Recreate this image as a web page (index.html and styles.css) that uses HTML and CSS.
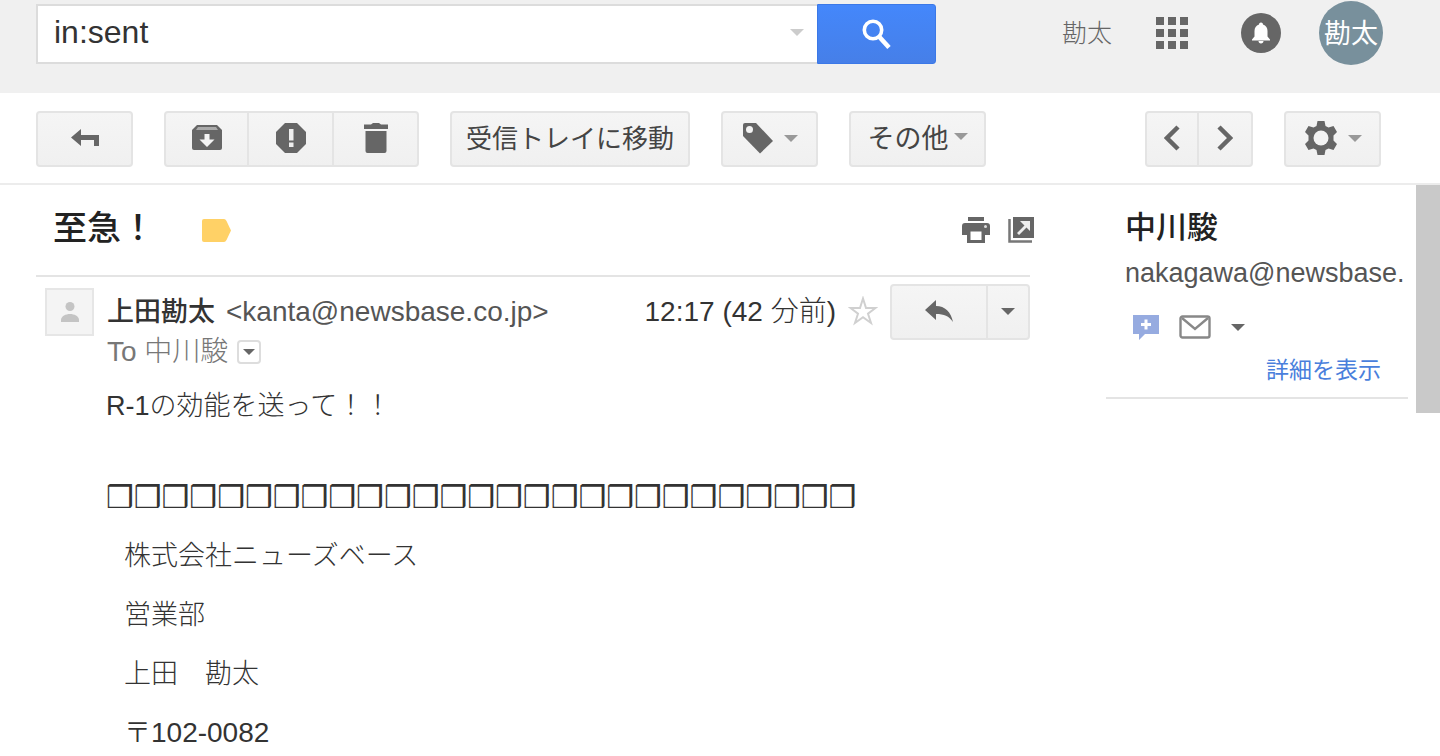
FILE: index.html
```html
<!DOCTYPE html>
<html lang="ja">
<head>
    <meta charset="UTF-8">
    <meta name="viewport" content="width=device-width, initial-scale=1.0">
    <title>至急！</title>
    <link rel="stylesheet" href="styles.css">
</head>
<body>

    <header class="header">
        <form class="search">
            <input class="search-input" type="text" value="in:sent" aria-label="検索">
            <button class="search-option" type="button" aria-label="検索オプション"><span class="caret light"></span></button>
            <button class="search-btn" type="submit" aria-label="検索">
                <svg width="30" height="32" viewBox="0 0 30 32" fill="none" stroke="#fff"><circle cx="11" cy="12" r="8.7" stroke-width="3.6"/><path d="M17 18.500L27 29.500" stroke-width="4.600"/></svg>
            </button>
        </form>
        <div class="account">
            <a class="account-name" href="#">勘太</a>
            <button class="icon-btn" aria-label="アプリ">
                <svg width="34" height="34" viewBox="0 0 34 34" fill="#666"><path d="M1 1h8v8H1zM13 1h8v8h-8zM25 1h8v8h-8zM1 13h8v8H1zM13 13h8v8h-8zM25 13h8v8h-8zM1 25h8v8H1zM13 25h8v8h-8zM25 25h8v8h-8z"/></svg>
            </button>
            <button class="icon-btn bell" aria-label="通知">
                <svg width="40" height="40" viewBox="0 0 40 40"><circle cx="20" cy="20" r="20" fill="#666"/><path d="M20 9.500c1.500 0 2 1 2 2 3 1 4.500 3.500 4.500 6.500v5.500l2.500 3v1H11v-1l2.500-3V18c0-3 1.500-5.500 4.500-6.500 0-1 .5-2 2-2zM17.500 28h5c0 1.500-1 2.500-2.500 2.500s-2.500-1-2.500-2.500z" fill="#fff"/></svg>
            </button>
            <button class="avatar">勘太</button>
        </div>
    </header>

    <nav class="toolbar">
        <button class="btn back" aria-label="戻る">
            <svg width="28" height="20" viewBox="0 0 28 20" fill="#666"><path d="M0 9.500L10 1v6h18v11h-5v-6H10v6z"/></svg>
        </button>
        <div class="btn-group">
            <button class="btn tool" aria-label="アーカイブ">
                <svg width="30" height="26" viewBox="0 0 30 26"><path d="M5 0h20l5 5v18q0 2-2 2H2q-2 0-2-2V5z" fill="#666"/><path d="M6 2h18l2 3H4z" fill="#aaa"/><path d="M12.500 9h5v5.500h5L15 22l-7.500-7.500h5z" fill="#f3f3f3"/></svg>
            </button>
            <button class="btn tool" aria-label="迷惑メール">
                <svg width="30" height="30" viewBox="0 0 30 30"><path d="M9 0h12l9 9v12l-9 9H9l-9-9V9z" fill="#666"/><path d="M13 6h4.500v11.500H13zM13 19.500h4.500V24H13z" fill="#eee"/></svg>
            </button>
            <button class="btn tool" aria-label="削除">
                <svg width="26" height="30" viewBox="0 0 26 30" fill="#666"><path d="M1 1.500h7L10 0h6l2 1.500h7V6H1zM2.500 8h21v20q0 2-2 2h-17q-2 0-2-2z"/></svg>
            </button>
        </div>
        <button class="btn text">受信トレイに移動</button>
        <button class="btn label" aria-label="ラベル">
            <svg width="32" height="32" viewBox="0 0 32 32"><path d="M3 1h11L31 19 18 31.500 1 14V3q0-2 2-2z" fill="#666"/><circle cx="7.500" cy="7.500" r="3.500" fill="#f3f3f3"/></svg>
            <span class="caret"></span>
        </button>
        <button class="btn text more">その他<span class="caret"></span></button>
        <div class="btn-group pager">
            <button class="btn page" aria-label="前へ">
                <svg width="16" height="26" viewBox="0 0 16 26" fill="none" stroke="#666" stroke-width="4.500"><path d="M14 2L3 13l11 11"/></svg>
            </button>
            <button class="btn page" aria-label="次へ">
                <svg width="16" height="26" viewBox="0 0 16 26" fill="none" stroke="#666" stroke-width="4.500"><path d="M2 2l11 11L2 24"/></svg>
            </button>
        </div>
        <button class="btn setting" aria-label="設定">
            <svg width="34" height="34" viewBox="0 0 34 34"><path d="M13.500 0h7l1 5 3 1.500L29.500 5 33 11l-3.500 3.500v5L33 23l-3.500 6-5-1.500-3 1.500-1 5h-7l-1-5-3-1.500-5 1.500L1 23l3.500-3.500v-5L1 11l3.500-6 5 1.500 3-1.500z" fill="#666"/><circle cx="17" cy="17" r="7.500" fill="#f3f3f3"/></svg>
            <span class="caret"></span>
        </button>
    </nav>

    <main class="main">
        <article class="mail">
            <div class="subject">
                <h1>至急！</h1>
                <svg width="29" height="23" viewBox="0 0 29 23"><path d="M2 0h20q1.500 0 2.500 2l4.500 9.500-4.500 9.500q-1 2-2.500 2H2q-2 0-2-2V2q0-2 2-2z" fill="#ffd166"/></svg>
                <div class="subject-tools">
                    <button class="icon-btn" aria-label="印刷">
                        <svg width="28" height="26" viewBox="0 0 28 26"><path d="M6 0h16v4H6zM3 6h22q3 0 3 3v9h-5v8H5v-8H0V9q0-3 3-3z" fill="#666"/><path d="M8.500 14.500h11V23h-11z" fill="#fff"/><circle cx="23.500" cy="9.500" r="1.500" fill="#ddd"/></svg>
                    </button>
                    <button class="icon-btn" aria-label="新しいウィンドウ">
                        <svg width="26" height="26" viewBox="0 0 26 26"><path d="M5 0h21v21H5z" fill="#666"/><path d="M1.500 2v22.500H24" fill="none" stroke="#777" stroke-width="2.500"/><path d="M12 4h10v10l-3.500-3.500L11 18l-2-2 7.500-7.500z" fill="#eee"/></svg>
                    </button>
                </div>
            </div>

            <div class="mail-head">
                <div class="photo">
                    <svg width="20" height="20" viewBox="0 0 20 20" fill="#c4c4c4"><circle cx="10" cy="4.500" r="4.500"/><path d="M1 20v-2c0-4 5-6 9-6s9 2 9 6v2z"/></svg>
                </div>
                <div class="from">
                    <div class="sender"><span class="sender-name">上田勘太</span><span class="address">&lt;kanta@newsbase.co.jp&gt;</span></div>
                    <div class="to">To 中川駿<button class="detail" aria-label="詳細を表示"><span class="caret dark small"></span></button></div>
                </div>
                <time class="time">12:17 (42 <span class="ago">分前</span>)</time>
                <button class="icon-btn star" aria-label="スター">
                    <svg width="30" height="30" viewBox="0 0 30 30" fill="none" stroke="#d0d0d0" stroke-width="2"><path d="M15 2.500l3 9.500h9.500l-7.500 5.700 3 9.300-8-5.800L7 27l3-9.300L2.500 12H12z"/></svg>
                </button>
                <div class="btn-group">
                    <button class="btn reply" aria-label="返信">
                        <svg width="28" height="22" viewBox="0 0 28 22" fill="#666"><path d="M11 0v6c9 0 15 6 17 16-4-6-9-8-17-8v6L0 10z"/></svg>
                    </button>
                    <button class="btn reply-more" aria-label="その他"><span class="caret dark"></span></button>
                </div>
            </div>

            <div class="mail-body">
                <p class="message">R-1の効能を送って！！</p>
                <p class="rule">❒❒❒❒❒❒❒❒❒❒❒❒❒❒❒❒❒❒❒❒❒❒❒❒❒❒❒</p>
                <div class="signature">
                    <p>株式会社ニューズベース</p>
                    <p>営業部</p>
                    <p>上田　勘太</p>
                    <p>〒<span class="zip">102-0082</span></p>
                </div>
            </div>
        </article>

        <aside class="contact">
            <h2>中川駿</h2>
            <div class="contact-mail">nakagawa@newsbase.</div>
            <div class="contact-tools">
                <button class="icon-btn" aria-label="チャット">
                    <svg width="26" height="26" viewBox="0 0 26 26"><path d="M0 1h26v19H12l-6 6v-6H0z" fill="#96abe0"/><path d="M11.500 5.500h3V9H18v3h-3.500v3.500h-3V12H8V9h3.500z" fill="#fff"/></svg>
                </button>
                <button class="icon-btn" aria-label="メール">
                    <svg width="32" height="24" viewBox="0 0 32 24" fill="none" stroke="#888" stroke-width="2.400"><rect x="1.500" y="1.500" width="29" height="21" rx="2"/><path d="M3 3l13 11L29 3"/></svg>
                </button>
                <button class="icon-btn" aria-label="その他"><span class="caret dark"></span></button>
            </div>
            <a class="contact-link" href="#">詳細を表示</a>
        </aside>
        <div class="scrollbar"></div>
    </main>

</body>
</html>
```

FILE: styles.css
```css
*{
    box-sizing: border-box;
}
body{
    margin: 0;
    height: 100vh;
    display: flex;
    flex-direction: column;
    overflow: hidden;
    background-color: #fff;
    color: #333;
    font-family: "Liberation Sans", "Noto Sans CJK JP", sans-serif;
    font-size: 28px;
    line-height: 40px;
}
h1,h2,p{
    margin: 0;
}
a{
    text-decoration: none;
}
button{
    padding: 0;
    font-family: inherit;
    cursor: pointer;
}
svg{
    display: block;
    flex: none;
}
.caret{
    border: 7px solid transparent;
    border-top-color: #999;
    border-bottom: 0;
}
.caret.light{
    border-top-color: #ccc;
}
.caret.dark{
    border-top-color: #666;
}
.caret.small{
    border-width: 6px;
    border-bottom: 0;
}
.icon-btn{
    display: flex;
    align-items: center;
    border: 0;
    background: none;
}

/* header */
.header{
    flex: none;
    display: flex;
    justify-content: space-between;
    height: 93px;
    padding: 0 57px 0 36px;
    background-color: #f0f0f0;
}
.search{
    display: flex;
    width: 900px;
    height: 60px;
    margin-top: 4px;
}
.search-input{
    flex: 1;
    min-width: 0;
    padding: 0 16px 4px;
    border: 2px solid #dcdcdc;
    border-right: 0;
    font-family: inherit;
    font-size: 32px;
    color: #333;
    outline: none;
}
.search-option{
    display: flex;
    align-items: center;
    width: 27px;
    padding-bottom: 4px;
    border: 2px solid #dcdcdc;
    border-width: 2px 0;
    background-color: #fff;
}
.search-btn{
    display: flex;
    align-items: center;
    justify-content: center;
    width: 119px;
    border: 1px solid #3b78e7;
    border-radius: 0 3px 3px 0;
    background: linear-gradient(#4487fb, #467fe8);
}
.account{
    display: flex;
    align-items: center;
    height: 66px;
}
.account-name{
    margin-right: 43px;
    font-size: 25px;
    font-weight: 300;
    color: #666;
}
.bell{
    margin: 0 38px 0 52px;
}
.avatar{
    width: 64px;
    height: 64px;
    padding-bottom: 4px;
    border: 0;
    border-radius: 50%;
    background-color: #78909c;
    color: #fff;
    font-size: 27px;
}

/* toolbar */
.toolbar{
    flex: none;
    display: flex;
    gap: 31px;
    height: 92px;
    padding: 18px 59px 0 36px;
    border-bottom: 2px solid #ececec;
}
.btn{
    display: flex;
    align-items: center;
    justify-content: center;
    height: 56px;
    padding-bottom: 2px;
    border: 2px solid #e4e4e4;
    border-radius: 4px;
    background: linear-gradient(#f5f5f5, #f0f0f0);
    color: #444;
    font-size: 26px;
}
.btn-group{
    display: flex;
}
.btn-group .btn + .btn{
    border-left: 0;
    border-top-left-radius: 0;
    border-bottom-left-radius: 0;
}
.btn-group .btn:not(:last-child){
    border-top-right-radius: 0;
    border-bottom-right-radius: 0;
}
.back,
.label,
.setting{
    width: 97px;
}
.tool{
    width: 85px;
}
.text{
    width: 240px;
    padding-bottom: 6px;
}
.label{
    gap: 10px;
}
.more{
    width: 137px;
    gap: 5px;
    font-size: 27px;
}
.pager{
    margin-left: auto;
}
.page{
    width: 54px;
}
.setting{
    gap: 10px;
}

/* mail */
.main{
    flex: 1;
    min-height: 0;
    display: flex;
}
.mail{
    flex: 1;
    min-width: 0;
    margin: 0 76px 0 36px;
}
.subject{
    display: flex;
    align-items: center;
    height: 92px;
    padding-left: 17px;
    border-bottom: 2px solid #e4e4e4;
}
.subject h1{
    margin-right: 47px;
    padding-bottom: 4px;
    font-size: 34px;
    font-weight: 500;
    color: #222;
}
.subject-tools{
    display: flex;
    gap: 18px;
    margin-left: auto;
    margin-right: -4px;
}
.mail-head{
    display: flex;
    align-items: flex-start;
    padding-top: 7px;
}
.photo{
    display: flex;
    align-items: center;
    justify-content: center;
    width: 49px;
    height: 48px;
    margin: 4px 13px 0 9px;
    border: 2px solid #e6e6e6;
    background-color: #f4f4f4;
}
.from{
    flex: 1;
}
.sender,
.time{
    margin-top: 8px;
}
.sender-name{
    margin-right: 11px;
    font-size: 27px;
    font-weight: 500;
}
.address{
    color: #555;
}
.to{
    display: flex;
    align-items: center;
    color: #777;
    font-weight: 300;
}
.detail{
    display: flex;
    align-items: center;
    justify-content: center;
    width: 24px;
    height: 24px;
    margin-left: 9px;
    border: 2px solid #ddd;
    border-radius: 4px;
    background-color: #fff;
}
.ago{
    font-weight: 300;
}
.star{
    margin: 12px 12px 0;
}
.reply{
    width: 98px;
}
.reply-more{
    width: 42px;
}
.mail-body{
    padding: 14px 0 0 70px;
    font-weight: 300;
}
.message,
.signature{
    font-size: 27px;
}
.rule{
    margin-top: 51px;
    font-family: "DejaVu Sans", sans-serif;
    font-weight: 700;
    font-size: 31px;
    white-space: nowrap;
}
.signature{
    padding-left: 18px;
}
.signature p{
    margin-top: 19px;
}
.zip{
    font-size: 28px;
}

/* contact */
.contact{
    width: 302px;
    height: 214px;
    margin-right: 8px;
    padding: 23px 0 0 19px;
    border-bottom: 2px solid #e4e4e4;
}
.contact h2{
    font-size: 31px;
    font-weight: 500;
    color: #222;
}
.contact-mail{
    margin-top: 5px;
    font-size: 27px;
    color: #555;
}
.contact-tools{
    display: flex;
    align-items: center;
    gap: 20px;
    height: 40px;
    margin: 14px 0 3px 8px;
}
.contact-link{
    display: block;
    margin-right: 27px;
    text-align: right;
    font-size: 23px;
    color: #4a7fdc;
}
.scrollbar{
    width: 24px;
    height: 228px;
    background-color: #c9c9c9;
}
```
